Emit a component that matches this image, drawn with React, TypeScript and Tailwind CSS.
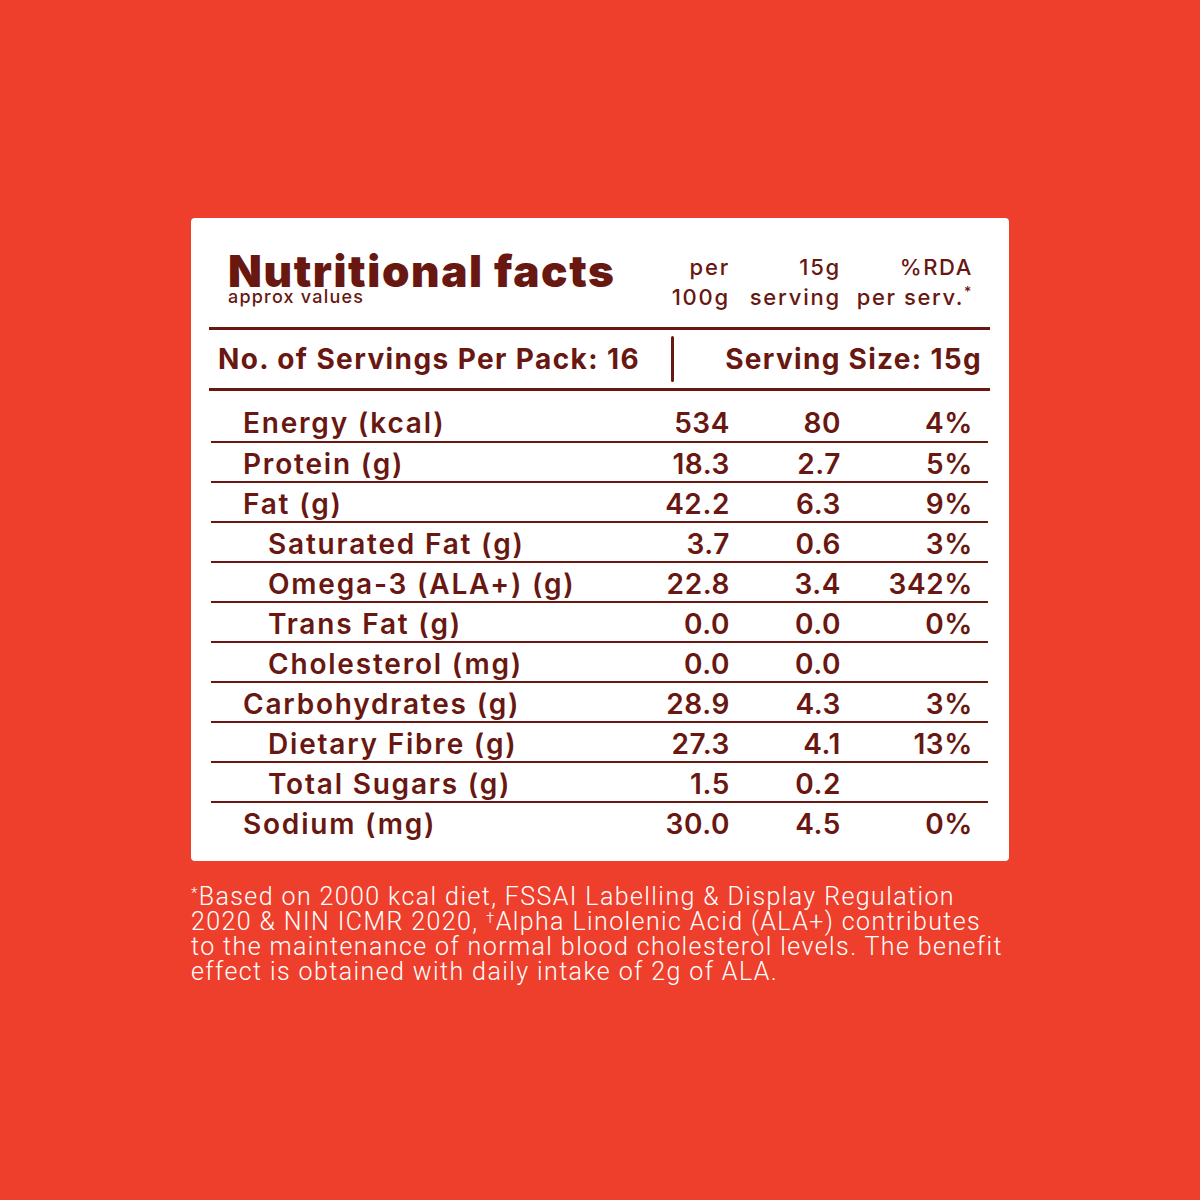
import React from "react";

type Row = { label: string; indent?: boolean; a: string; b: string; c: string };

const rows: Row[] = [
  { label: "Energy (kcal)", a: "534", b: "80", c: "4%" },
  { label: "Protein (g)", a: "18.3", b: "2.7", c: "5%" },
  { label: "Fat (g)", a: "42.2", b: "6.3", c: "9%" },
  { label: "Saturated Fat (g)", indent: true, a: "3.7", b: "0.6", c: "3%" },
  { label: "Omega-3 (ALA+) (g)", indent: true, a: "22.8", b: "3.4", c: "342%" },
  { label: "Trans Fat (g)", indent: true, a: "0.0", b: "0.0", c: "0%" },
  { label: "Cholesterol (mg)", indent: true, a: "0.0", b: "0.0", c: "" },
  { label: "Carbohydrates (g)", a: "28.9", b: "4.3", c: "3%" },
  { label: "Dietary Fibre (g)", indent: true, a: "27.3", b: "4.1", c: "13%" },
  { label: "Total Sugars (g)", indent: true, a: "1.5", b: "0.2", c: "" },
  { label: "Sodium (mg)", a: "30.0", b: "4.5", c: "0%" },
];

export default function App() {
  return (
    <div
      className="w-[1200px] h-[1200px] bg-[#EE3F2C] pt-[218px] text-[#681711]"
      style={{ fontFamily: "Inter, 'Noto Sans', sans-serif" }}
    >
      <div className="w-[818px] mx-auto">
        <div className="bg-white rounded-[4px] pt-[34px] pb-[18px] pl-[18px] pr-[19px]">
          {/* header */}
          <div className="h-[75px] mx-[2px] pr-[15px] grid grid-cols-[1fr_100px_111px_132px] items-start">
            <div className="pl-[17px]">
              <div className="text-[44px] leading-[38px] font-black tracking-[1.6px] whitespace-nowrap">Nutritional facts</div>
              <div className="text-[18px] leading-[14px] font-medium tracking-[1.2px]">approx values</div>
            </div>
            <div className="text-right text-[22px] leading-[30px] font-medium tracking-[1.8px] whitespace-nowrap">
              <div>per</div>
              <div>100g</div>
            </div>
            <div className="text-right text-[22px] leading-[30px] font-medium tracking-[1.8px] whitespace-nowrap">
              <div>15g</div>
              <div>serving</div>
            </div>
            <div className="text-right text-[22px] leading-[30px] font-medium tracking-[1.6px] whitespace-nowrap">
              <div>%RDA</div>
              <div>
                per serv.<span className="relative -top-[8px] text-[14px] leading-none">*</span>
              </div>
            </div>
          </div>
          <div className="h-[3px] bg-[#681711]" />
          {/* servings */}
          <div className="h-[58px] flex items-center">
            <div className="w-[462px] pl-[9px] text-[28px] font-bold tracking-[1.4px] whitespace-nowrap">No. of Servings Per Pack: 16</div>
            <div className="w-[3px] h-[46px] rounded-full bg-[#681711]" />
            <div className="flex-1 text-right pr-[8px] text-[28px] font-bold tracking-[1.3px] whitespace-nowrap">Serving Size: 15g</div>
          </div>
          <div className="h-[3px] bg-[#681711]" />
          {/* rows */}
          <div className="mx-[2px]">
            {rows.map((r, i) => {
              const first = i === 0;
              const last = i === rows.length - 1;
              return (
                <div
                  key={r.label}
                  className={
                    "grid grid-cols-[1fr_100px_111px_132px] pr-[15px] items-center text-[28px] font-semibold tracking-[0.6px] " +
                    (first ? "h-[52px] pt-[11px] " : "h-[40px] ") +
                    (last ? "" : "border-b-2 border-[#681711]")
                  }
                >
                  <div className={(r.indent ? "pl-[57px]" : "pl-[32px]") + " whitespace-nowrap tracking-[1.8px]"}>{r.label}</div>
                  <div className="text-right">{r.a}</div>
                  <div className="text-right">{r.b}</div>
                  <div className="text-right">{r.c}</div>
                </div>
              );
            })}
          </div>
        </div>
        <div
          className="mt-[23px] text-white text-[25px] leading-[25px] font-light tracking-[1.4px] whitespace-nowrap"
          style={{ fontFamily: "Roboto, sans-serif" }}
        >
          <div>
            <span className="relative -top-[7px] text-[15px] leading-none">*</span>Based on 2000 kcal diet, FSSAI Labelling &amp; Display Regulation
          </div>
          <div>
            2020 &amp; NIN ICMR 2020, <span className="relative -top-[7px] text-[15px] leading-none">†</span>Alpha Linolenic Acid (ALA+) contributes
          </div>
          <div>to the maintenance of normal blood cholesterol levels. The benefit</div>
          <div>effect is obtained with daily intake of 2g of ALA.</div>
        </div>
      </div>
    </div>
  );
}
